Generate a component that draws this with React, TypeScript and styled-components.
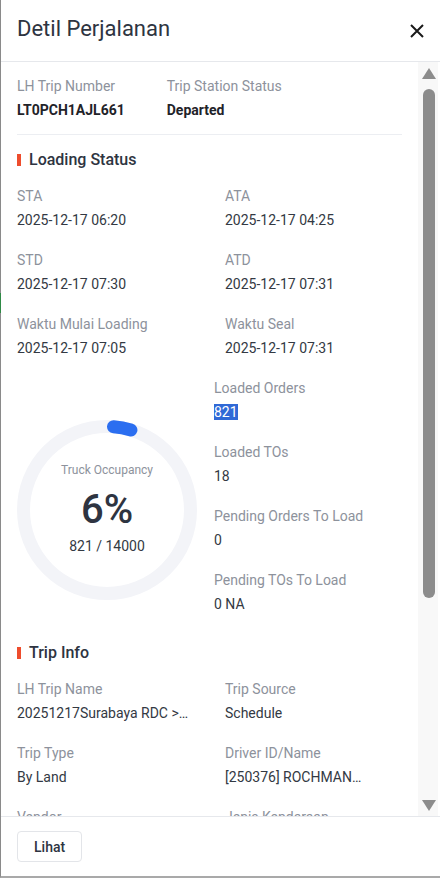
import React from 'react'
import styled, { createGlobalStyle } from 'styled-components'

const GlobalStyle = createGlobalStyle`
    html,
    body {
        margin: 0;
        padding: 0;
        background: #ffffff;
    }
    body {
        font-family: Roboto, 'Noto Sans', 'Liberation Sans', sans-serif;
        -webkit-font-smoothing: antialiased;
    }
    #root {
        height: 100vh;
    }
    * {
        box-sizing: border-box;
    }
`

const Drawer = styled.aside`
    position: relative;
    display: flex;
    flex-direction: column;
    height: 100vh;
    background: #ffffff;
    border-left: 1px solid #8a8a8a;
    border-bottom: 2px solid #a9a9a9;
`

// small green tab of the page behind, peeking past the drawer edge
const EdgeMark = styled.span`
    position: absolute;
    left: -1px;
    top: 293px;
    width: 1px;
    height: 20px;
    background: #2f8a46;
`

const Header = styled.header`
    display: flex;
    align-items: center;
    justify-content: space-between;
    height: 62px;
    padding: 0 16px;
    border-bottom: 1px solid #e6e8ec;
    flex-shrink: 0;
`

const Title = styled.h2`
    margin: 0 0 3px;
    font-size: 22px;
    font-weight: 400;
    color: #2e3441;
    line-height: 28px;
`

const CloseButton = styled.button`
    display: flex;
    align-items: center;
    justify-content: center;
    width: 14px;
    height: 14px;
    padding: 0;
    border: none;
    background: transparent;
    cursor: pointer;
`

const Main = styled.div`
    flex: 1;
    display: flex;
    min-height: 0;
`

const Content = styled.div`
    flex: 1;
    min-width: 0;
    overflow: hidden;
    padding: 14px 16px 16px;
`

const SCROLL_GREY = '#8c8c8c'

const Rail = styled.div`
    display: flex;
    flex-direction: column;
    width: 20px;
    margin-right: 2px;
    background: #f8f8f8;
`

const RailArrow = styled.div<{ $down?: boolean }>`
    display: flex;
    align-items: center;
    justify-content: center;
    height: 22px;
    padding-left: 2px;

    &::before {
        content: '';
        width: 0;
        height: 0;
        border-left: 7px solid transparent;
        border-right: 7px solid transparent;
        ${(p) =>
            p.$down
                ? `border-top: 11px solid ${SCROLL_GREY}; margin-top: 1px;`
                : `border-bottom: 11px solid ${SCROLL_GREY};`}
    }
`

const RailTrack = styled.div`
    flex: 1;
    padding: 5px 3px 0 5px;
`

const RailThumb = styled.div`
    height: 509px;
    border-radius: 6px;
    background: ${SCROLL_GREY};
`

const Footer = styled.footer`
    flex-shrink: 0;
    padding: 14px 16px;
    border-top: 1px solid #e6e8ec;
`

const Button = styled.button`
    height: 31px;
    padding: 0 16px;
    font-family: inherit;
    font-size: 14px;
    font-weight: 500;
    color: #2e3441;
    background: #ffffff;
    border: 1px solid #e3e5e9;
    border-radius: 4px;
    cursor: pointer;
`

const TopRow = styled.div`
    display: flex;
    gap: 42px;
    padding-bottom: 14px;
    border-bottom: 1px solid #eceef2;
`

const Field = styled.div<{ $bold?: boolean }>`
    display: flex;
    flex-direction: column;
    gap: 4px;
    min-width: 0;
    font-size: 14px;
    line-height: 20px;

    dt {
        color: #8d929c;
    }
    dd {
        margin: 0;
        color: ${(p) => (p.$bold ? '#1f2329' : '#333943')};
        font-weight: ${(p) => (p.$bold ? 700 : 400)};
        white-space: nowrap;
        overflow: hidden;
    }
`

const Section = styled.section<{ $top: number }>`
    margin-top: ${(p) => p.$top}px;
`

const SectionTitle = styled.h3`
    display: flex;
    align-items: center;
    gap: 8px;
    margin: 0 0 15px;
    font-size: 16px;
    font-weight: 500;
    line-height: 22px;
    color: #2e3441;

    &::before {
        content: '';
        width: 4px;
        height: 12px;
        background: #ee4d2d;
    }
`

const Grid = styled.dl`
    display: grid;
    grid-template-columns: 1fr 1fr;
    column-gap: 31px;
    row-gap: 20px;
    margin: 0;
`

const Occupancy = styled.div`
    display: flex;
    gap: 17px;
    margin-top: 20px;
`

const Donut = styled.div`
    position: relative;
    width: 180px;
    height: 180px;
    margin-top: 42px;
    flex-shrink: 0;
`

const DonutCenter = styled.div`
    position: absolute;
    inset: 0;
    display: flex;
    flex-direction: column;
    align-items: center;
    justify-content: center;
    padding-bottom: 2px;
`

const DonutLabel = styled.span`
    font-size: 12px;
    line-height: 16px;
    color: #8d929c;
`

const Percent = styled.span`
    margin: 10px 0 4px;
    font-size: 40px;
    font-weight: 500;
    line-height: 44px;
    color: #2e3441;
`

const Ratio = styled.span`
    font-size: 14px;
    line-height: 20px;
    color: #333943;
`

const Stats = styled.dl`
    display: flex;
    flex-direction: column;
    gap: 20px;
    margin: 0;
`

const Selected = styled.span`
    background: #3069d6;
    color: #ffffff;
`

const R = 83.5
const STROKE = 13

// point on the ring, angle in degrees measured clockwise from 12 o'clock
const polar = (deg: number) => {
    const a = (deg * Math.PI) / 180
    return [90 + R * Math.sin(a), 90 - R * Math.cos(a)]
}

const ProgressRing = ({ value }: { value: number }) => {
    // round caps sit inside the arc, so trim half the stroke off each end
    const capDeg = ((STROKE / 2) / R) * (180 / Math.PI)
    const end = value * 360
    const [x1, y1] = polar(capDeg)
    const [x2, y2] = polar(Math.max(capDeg, end - capDeg))
    return (
        <svg width="180" height="180" viewBox="0 0 180 180">
            <circle cx="90" cy="90" r={R} fill="none" stroke="#f3f4f8" strokeWidth={STROKE} />
            <path
                d={`M ${x1} ${y1} A ${R} ${R} 0 0 1 ${x2} ${y2}`}
                fill="none"
                stroke="#2b6ef0"
                strokeWidth={STROKE}
                strokeLinecap="round"
            />
        </svg>
    )
}

type Item = { label: string; value: React.ReactNode }

const loading: Item[] = [
    { label: 'STA', value: '2025-12-17 06:20' },
    { label: 'ATA', value: '2025-12-17 04:25' },
    { label: 'STD', value: '2025-12-17 07:30' },
    { label: 'ATD', value: '2025-12-17 07:31' },
    { label: 'Waktu Mulai Loading', value: '2025-12-17 07:05' },
    { label: 'Waktu Seal', value: '2025-12-17 07:31' },
]

const stats: Item[] = [
    { label: 'Loaded Orders', value: <Selected>821</Selected> },
    { label: 'Loaded TOs', value: '18' },
    { label: 'Pending Orders To Load', value: '0' },
    { label: 'Pending TOs To Load', value: '0 NA' },
]

const trip: Item[] = [
    { label: 'LH Trip Name', value: '20251217Surabaya RDC >…' },
    { label: 'Trip Source', value: 'Schedule' },
    { label: 'Trip Type', value: 'By Land' },
    { label: 'Driver ID/Name', value: '[250376] ROCHMAN…' },
    { label: 'Vendor', value: 'PT Logistik Nusantara' },
    { label: 'Jenis Kendaraan', value: 'CDD Box' },
    { label: 'Nomor Polisi', value: 'L 9012 UE' },
    { label: 'Helper', value: '-' },
]

const Fields = ({ items }: { items: Item[] }) => (
    <>
        {items.map((it) => (
            <Field key={it.label}>
                <dt>{it.label}</dt>
                <dd>{it.value}</dd>
            </Field>
        ))}
    </>
)

export default function App() {
    return (
        <>
            <GlobalStyle />
            <Drawer>
                <EdgeMark />
                <Header>
                    <Title>Detil Perjalanan</Title>
                    <CloseButton aria-label="Tutup">
                        <svg width="14" height="14" viewBox="0 0 14 14">
                            <path d="M1 1 13 13M13 1 1 13" stroke="#1a1a1a" strokeWidth="2" />
                        </svg>
                    </CloseButton>
                </Header>
                <Main>
                    <Content>
                        <TopRow>
                            <Field $bold>
                                <dt>LH Trip Number</dt>
                                <dd>LT0PCH1AJL661</dd>
                            </Field>
                            <Field $bold>
                                <dt>Trip Station Status</dt>
                                <dd>Departed</dd>
                            </Field>
                        </TopRow>

                        <Section $top={14}>
                            <SectionTitle>Loading Status</SectionTitle>
                            <Grid>
                                <Fields items={loading} />
                            </Grid>
                            <Occupancy>
                                <Donut>
                                    <ProgressRing value={821 / 14000} />
                                    <DonutCenter>
                                        <DonutLabel>Truck Occupancy</DonutLabel>
                                        <Percent>6%</Percent>
                                        <Ratio>821 / 14000</Ratio>
                                    </DonutCenter>
                                </Donut>
                                <Stats>
                                    <Fields items={stats} />
                                </Stats>
                            </Occupancy>
                        </Section>

                        <Section $top={28}>
                            <SectionTitle>Trip Info</SectionTitle>
                            <Grid>
                                <Fields items={trip} />
                            </Grid>
                        </Section>
                    </Content>
                    <Rail aria-hidden>
                        <RailArrow />
                        <RailTrack>
                            <RailThumb />
                        </RailTrack>
                        <RailArrow $down />
                    </Rail>
                </Main>
                <Footer>
                    <Button>Lihat</Button>
                </Footer>
            </Drawer>
        </>
    )
}
